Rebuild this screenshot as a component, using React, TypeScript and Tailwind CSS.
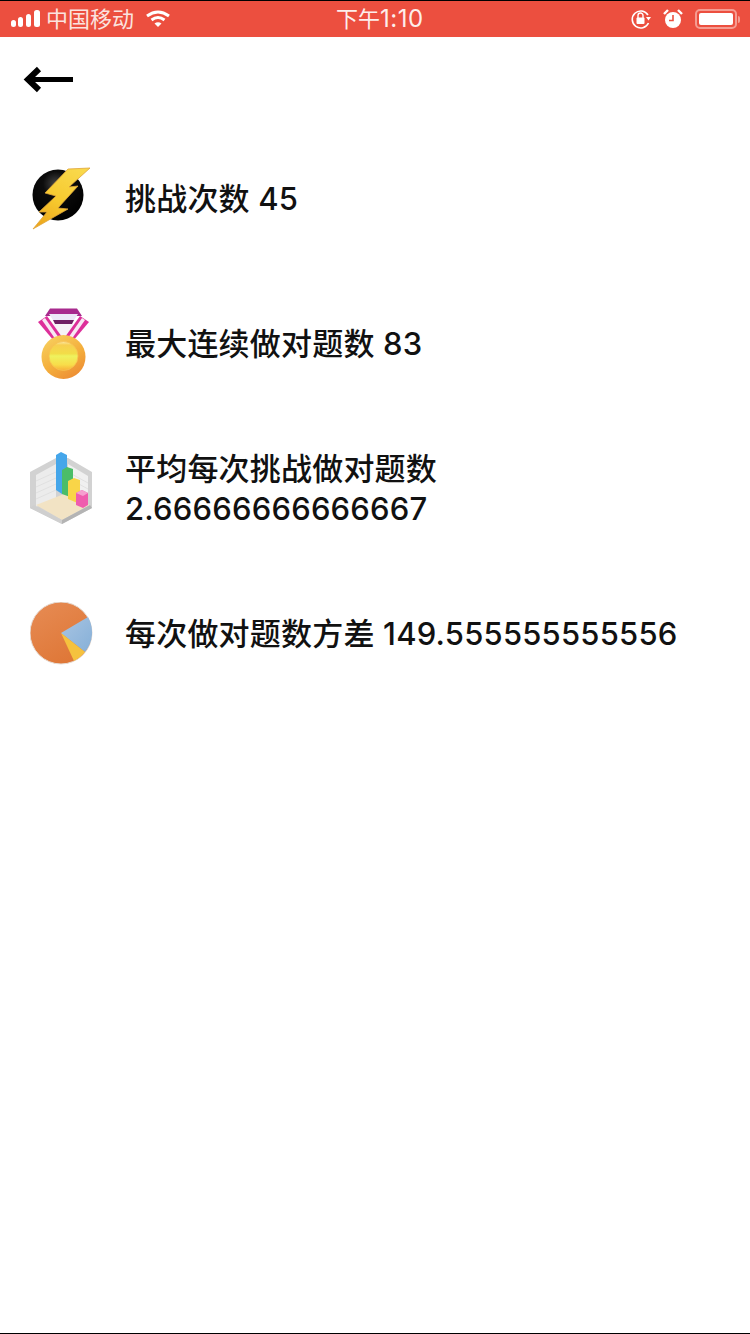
import React from "react";

const Bolt = () => (
  <svg width="64" height="66" viewBox="0 0 64 66">
    <defs>
      <linearGradient id="boltG" x1="0.7" y1="0" x2="0.25" y2="1">
        <stop offset="0" stopColor="#f9d84a" />
        <stop offset="0.55" stopColor="#f6c92e" />
        <stop offset="1" stopColor="#eda81e" />
      </linearGradient>
      <radialGradient id="ballG" cx="0.45" cy="0.28" r="0.7">
        <stop offset="0" stopColor="#444" />
        <stop offset="0.35" stopColor="#0c0c0c" />
        <stop offset="1" stopColor="#000" />
      </radialGradient>
    </defs>
    <circle cx="28" cy="29" r="25.5" fill="url(#ballG)" />
    <path d="M38 3 L60 2 L39 21 L48 20 L28 42 L38 43 L3 63 L17 46 L9 46 L26 30 L15 27 Z" fill="url(#boltG)" stroke="#e0a538" strokeWidth="0.8" strokeLinejoin="round" />
  </svg>
);

const Medal = () => (
  <svg width="64" height="74" viewBox="0 0 64 74">
    <defs>
      <linearGradient id="rimG" x1="0.2" y1="0" x2="0.8" y2="1">
        <stop offset="0" stopColor="#f7cf5e" />
        <stop offset="0.55" stopColor="#f4ae3c" />
        <stop offset="1" stopColor="#ec8a34" />
      </linearGradient>
      <linearGradient id="coreG" x1="0" y1="0" x2="0" y2="1">
        <stop offset="0" stopColor="#fbe9a8" />
        <stop offset="0.12" stopColor="#f7cf50" />
        <stop offset="0.42" stopColor="#f2dd48" />
        <stop offset="0.5" stopColor="#eef25e" />
        <stop offset="0.8" stopColor="#f8dd4a" />
        <stop offset="1" stopColor="#f9ae38" />
      </linearGradient>
    </defs>
    <path d="M24 17 L43 17 L41 32 L26 32 Z" fill="#f6f3f6" />
    <path d="M8 15 L17 9 L32 30 L24 34 Z" fill="#dd2f9a" />
    <path d="M12 13 L15 11 L29 31 L26 33 Z" fill="#f7e9f3" />
    <path d="M59 15 L50 9 L35 30 L43 34 Z" fill="#dd2f9a" />
    <path d="M55 13 L52 11 L38 31 L41 33 Z" fill="#f7e9f3" />
    <path d="M20 1.5 L47 1.5 L52 9 L15 9 Z" fill="#a82a8e" />
    <path d="M19 7 L48 7 L44 13 L23 13 Z" fill="#ece8f8" />
    <path d="M23 13 L44 13 L42 17 L25 17 Z" fill="#6f2064" />
    <circle cx="33.5" cy="50" r="22" fill="url(#rimG)" />
    <circle cx="33.5" cy="49" r="14.5" fill="url(#coreG)" stroke="#f6c050" strokeWidth="0.8" />
  </svg>
);

const Chart = () => (
  <svg width="64" height="74" viewBox="0 0 64 74">
    <path d="M0 20 L26 6 L38 6 L62 20 L62 56 L32 72 L0 56 Z" fill="#d2d2d2" />
    <path d="M6 23 L26 12 L26 46 L6 55 Z" fill="#ececec" />
    <path d="M38 12 L58 24 L58 54 L38 44 Z" fill="#f0f0f0" />
    <g stroke="#dddddd" strokeWidth="0.8">
      <path d="M6 29 L26 20 M6 35 L26 26 M6 41 L26 32 M6 47 L26 38" />
      <path d="M38 20 L58 31 M38 26 L58 37 M38 32 L58 43" />
    </g>
    <path d="M6 53 L34 42 L60 53 L32 68 Z" fill="#f2e3c4" />
    <path d="M0 56 L32 72 L32 68 L4 53 Z" fill="#cfcfcf" />
    <path d="M62 56 L32 72 L32 68 L60 53 Z" fill="#b4b4b4" />
    <path d="M26 3 L31 0 L37 3 L37 40 L32 42 L26 38 Z" fill="#45a6ea" />
    <path d="M32 18 L37 15 L43 17 L43 46 L32 42 Z" fill="#4bbd68" />
    <path d="M38 29 L44 26 L50 28 L50 52 L38 47 Z" fill="#f9d548" />
    <path d="M46 41 L52 38 L58 41 L58 53 L53 56 L46 53 Z" fill="#ef5cae" />
    <path d="M46 41 L52 38 L58 41 L53 44 Z" fill="#f59fcf" />
  </svg>
);

const Pie = () => (
  <svg width="64" height="64" viewBox="0 0 64 64">
    <defs>
      <linearGradient id="pieO" x1="0.2" y1="0" x2="0.8" y2="1">
        <stop offset="0" stopColor="#e68a52" />
        <stop offset="1" stopColor="#de7534" />
      </linearGradient>
      <linearGradient id="pieB" x1="0" y1="0" x2="1" y2="1">
        <stop offset="0" stopColor="#a8c4e2" />
        <stop offset="1" stopColor="#86b0d8" />
      </linearGradient>
    </defs>
    <circle cx="31" cy="31" r="31" fill="url(#pieO)" stroke="#e6ddd6" strokeWidth="1" />
    <path d="M31 31 L58 15 A31 31 0 0 1 55 50 Z" fill="url(#pieB)" />
    <path d="M31 31 L55 50 A31 31 0 0 1 44 59 Z" fill="#f5c23e" />
  </svg>
);

const rows: { icon: React.ReactNode; lines: string[] }[] = [
  { icon: <Bolt />, lines: ["挑战次数 45"] },
  { icon: <Medal />, lines: ["最大连续做对题数 83"] },
  { icon: <Chart />, lines: ["平均每次挑战做对题数", "2.66666666666667"] },
  { icon: <Pie />, lines: ["每次做对题数方差 149.555555555556"] },
];

export default function App() {
  return (
    <div className="w-[750px] h-[1334px] bg-white flex flex-col border-b border-black font-['Inter','Noto_Sans_CJK_SC',sans-serif] overflow-hidden">
      <div className="h-[37px] shrink-0 bg-[#ec4f3f] border-t border-black relative flex items-center text-white">
        <div className="flex items-center pl-[11px] w-[300px]">
          <svg width="30" height="18" viewBox="0 0 30 18" fill="#fff" className="shrink-0">
            <rect x="0" y="10" width="5" height="7" rx="2.5" />
            <rect x="7" y="7" width="5" height="10" rx="2.5" />
            <rect x="15" y="4" width="5" height="13" rx="2.5" />
            <rect x="23" y="0" width="6" height="17" rx="2.5" />
          </svg>
          <span className="ml-[5px] text-[22px] leading-[28px] text-[#fbe3df]">中国移动</span>
          <svg width="26" height="18" viewBox="0 0 26 18" fill="none" stroke="#fff" strokeWidth="3" className="ml-[11px] shrink-0">
            <path d="M2 6 Q13 -2 24 6" />
            <path d="M6.5 10 Q13 5 19.5 10" />
            <path d="M13 17 L9.5 13.5 Q13 11 16.5 13.5Z" fill="#fff" stroke="none" />
          </svg>
        </div>
        <span className="absolute left-[336px] text-[22px] leading-[28px] text-[#fdeeeb] whitespace-nowrap">
          下午<span className="text-[24px] tracking-[0.5px]">1:10</span>
        </span>
        <div className="ml-auto flex items-center pr-[10px]">
          <svg width="22" height="22" viewBox="0 0 22 22" fill="none" className="shrink-0">
            <path d="M18 7 A8.5 8.5 0 1 0 18.5 15" stroke="#fff" strokeWidth="1.6" />
            <path d="M16 9 L21 9 L18.5 12.5Z" fill="#fff" />
            <rect x="6.5" y="9.5" width="8" height="6.5" rx="1" fill="#fff" />
            <path d="M8 10 V7.5 a2.5 2.5 0 0 1 5 0 V10" stroke="#fff" strokeWidth="1.4" />
          </svg>
          <svg width="20" height="22" viewBox="0 0 20 22" fill="none" className="ml-[11px] shrink-0">
            <circle cx="10" cy="12" r="8" fill="#fff" />
            <path d="M10 7 V12.5 H6" stroke="#ec4f3f" strokeWidth="1.6" />
            <path d="M1 6 L5 2 M19 6 L15 2" stroke="#fff" strokeWidth="2.4" />
          </svg>
          <div className="ml-[12px] w-[42px] h-[20px] rounded-[5px] border-2 border-[#f59c91] p-[2px] flex shrink-0">
            <div className="flex-1 bg-white rounded-[2px]" />
          </div>
          <div className="ml-[1px] w-[2px] h-[7px] bg-[#f59c91] rounded-r-sm shrink-0" />
        </div>
      </div>

      <div className="h-[89px] shrink-0 pl-[23px] pt-[29px]">
        <svg width="50" height="28" viewBox="0 0 50 28" fill="none" stroke="#000" className="block">
          <path d="M5 13.5 H50" strokeWidth="5" />
          <path d="M16 3 L5 13.5 L16 24" strokeWidth="6" />
        </svg>
      </div>

      {rows.map((r, i) => (
        <div key={i} className="h-[145px] shrink-0 flex items-center">
          <div className="w-[64px] ml-[30px] flex items-center justify-center shrink-0 blur-[0.4px]">{r.icon}</div>
          <div className="ml-[31px] text-[31px] tracking-[0.2px] leading-[40px] font-medium text-[#111]">
            {r.lines.map((l) => (
              <div key={l}>{l}</div>
            ))}
          </div>
        </div>
      ))}
    </div>
  );
}
